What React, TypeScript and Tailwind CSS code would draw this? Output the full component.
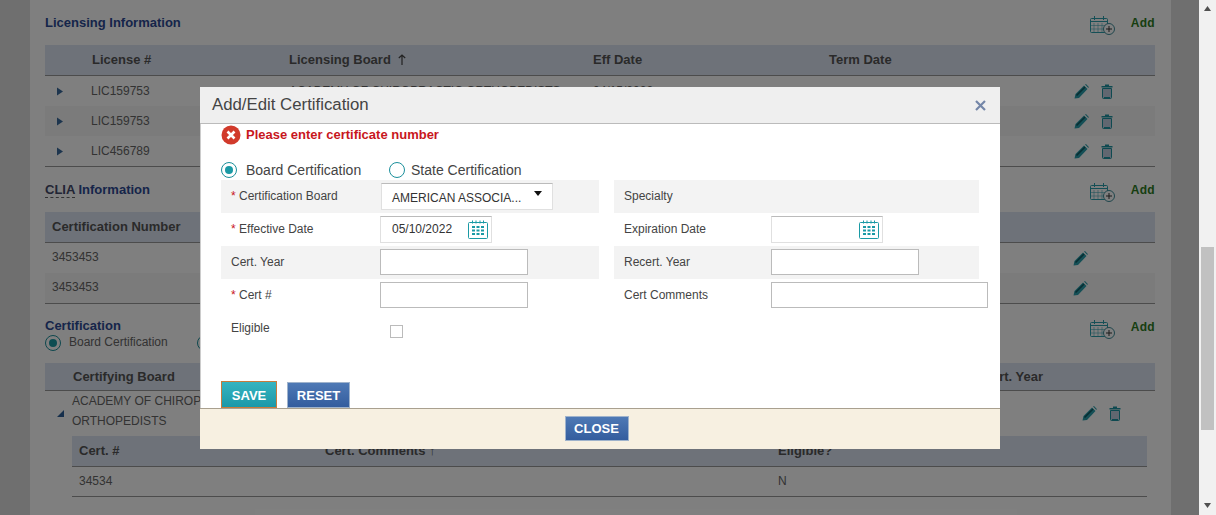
const FONT = "font-['Liberation_Sans',Arial,sans-serif]";

function CalendarPlus() {
  return (
    <svg width="25" height="19" viewBox="0 0 25 19" fill="none" stroke="#2a9fac" strokeWidth="1">
      <rect x="0.5" y="2.5" width="17" height="14" rx="1" />
      <path d="M0.5 5.5h17" />
      <path d="M4 7v9M8 7v9M12 7v9M1 9.5h16M1 13h16" strokeWidth="0.5" />
      <path d="M4.5 0v4M13.5 0v4" />
      <circle cx="19" cy="13" r="5.5" fill="#fff" stroke="#3f8d99" />
      <path d="M19 10v6M16 13h6" stroke="#333" />
    </svg>
  );
}

function Pencil() {
  return (
    <svg width="15" height="15" viewBox="0 0 15 15">
      <path d="M0.5 14.5l1-4.5 8.5-8.5 3.5 3.5L5 14z" fill="#2a9fac" />
      <path d="M11 0.6l1-0.5 2.8 2.8-0.5 1z" fill="#2a9fac" />
      <path d="M2.5 11.5l8.5-8.5" stroke="#0f5a63" strokeWidth="1.6" />
    </svg>
  );
}

function Trash() {
  return (
    <svg width="12" height="15" viewBox="0 0 12 15">
      <path d="M4 0.5h4v1.5h3.5v1.5H0.5V2H4z" fill="#1f95a3" />
      <path d="M1.5 4.5h9V13.5a1 1 0 0 1-1 1h-7a1 1 0 0 1-1-1z" fill="#c3cfe0" stroke="#1f95a3" />
      <path d="M3 13.5h6" stroke="#1f95a3" />
    </svg>
  );
}

function RowActions({ trash = true }: { trash?: boolean }) {
  return (
    <div className="flex items-center gap-[12px]">
      <Pencil />
      {trash && <Trash />}
    </div>
  );
}

function Caret({ open = false }: { open?: boolean }) {
  if (open) {
    return (
      <svg width="7" height="7" viewBox="0 0 7 7">
        <path d="M7 0v7H0z" fill="#2c5f98" />
      </svg>
    );
  }
  return (
    <svg width="6" height="9" viewBox="0 0 6 9">
      <path d="M0 0.5l6 4-6 4z" fill="#3a6a9c" />
    </svg>
  );
}

function SectionAdd() {
  return (
    <div className="flex items-start gap-[16px]">
      <div className="mt-[16px]">
        <CalendarPlus />
      </div>
      <span className="mt-[14px] text-[12px] leading-[18px] font-bold tracking-[0.3px] text-[#2e7d1f]">Add</span>
    </div>
  );
}

function Radio({ on = false }: { on?: boolean }) {
  return (
    <span className="flex h-[16px] w-[16px] shrink-0 items-center justify-center rounded-full border border-[#1a8f9b] bg-white">
      {on && <span className="h-[8px] w-[8px] rounded-full bg-[#1a9aa5]" />}
    </span>
  );
}

function Page() {
  const licenses = [
    ["LIC159753", "ACADEMY OF CHIROPRACTIC ORTHOPEDISTS", "04/15/2022"],
    ["LIC159753", "", ""],
    ["LIC456789", "", ""],
  ];
  return (
    <div className="ml-[30px] mr-[28px] h-full bg-white pl-[15px] pr-[16px] text-[12px] text-[#666]">
      <div className="flex h-[45px] items-start justify-between">
        <span className="mt-[15px] text-[13px] leading-[15px] font-bold text-[#2c4a94]">Licensing Information</span>
        <SectionAdd />
      </div>
      <div className="grid h-[31px] grid-cols-[47px_197px_304px_236px_1fr] items-center border-b border-[#999] bg-[#dce4f2] pb-[1px] text-[13px] font-bold text-[#555]">
        <span />
        <span>License #</span>
        <span className="flex items-center gap-[7px]">
          Licensing Board
          <svg width="8" height="11" viewBox="0 0 8 11" fill="none" stroke="#444" strokeWidth="1.2">
            <path d="M4 11V1M0.8 4L4 1l3.2 3" />
          </svg>
        </span>
        <span>Eff Date</span>
        <span>Term Date</span>
      </div>
      <div className="border-b border-[#999]">
        {licenses.map((row, i) => (
          <div
            key={i}
            className={`grid h-[30px] grid-cols-[12px_22px_198px_304px_1fr_81px] items-center pl-[12px] ${i === 1 ? "bg-[#f7f7f7]" : ""}`}
          >
            <Caret />
            <span />
            <span>{row[0]}</span>
            <span>{row[1]}</span>
            <span>{row[2]}</span>
            <RowActions />
          </div>
        ))}
      </div>

      <div className="flex h-[45px] items-start justify-between">
        <span className="mt-[15px] text-[13px] leading-[15px] font-bold text-[#2c4a94]">
          <span className="border-b border-dashed border-[#666] text-[#444a6a]">CLIA</span> Information
        </span>
        <SectionAdd />
      </div>
      <div className="flex h-[31px] items-center border-b border-[#999] bg-[#dce4f2] pb-[1px] pl-[7px] text-[13px] font-bold text-[#555]">
        Certification Number
      </div>
      <div className="border-b border-[#999]">
        {["3453453", "3453453"].map((n, i) => (
          <div
            key={i}
            className={`flex h-[30px] items-center justify-between pl-[7px] pr-[67px] ${i === 1 ? "bg-[#f7f7f7]" : ""}`}
          >
            <span className="pb-[2px]">{n}</span>
            <RowActions trash={false} />
          </div>
        ))}
      </div>

      <div className="flex h-[59px] items-start justify-between">
        <div className="pt-[15px]">
          <div className="text-[13px] leading-[14px] font-bold text-[#2c4a94]">Certification</div>
          <div className="flex items-center gap-[8px]">
            <Radio on />
            <span className="pb-[2px]">Board Certification</span>
            <span className="ml-[21px]">
              <Radio />
            </span>
          </div>
        </div>
        <SectionAdd />
      </div>
      <div className="flex h-[28px] items-center justify-between border-b border-[#999] bg-[#dce4f2] pl-[28px] pr-[112px] text-[13px] font-bold text-[#555]">
        <span>Certifying Board</span>
        <span>Recert. Year</span>
      </div>
      <div className="flex h-[45px] items-center pl-[12px] pr-[34px]">
        <Caret open />
        <span className="mb-[6px] ml-[8px] w-[200px] leading-[20px]">ACADEMY OF CHIROPRACTIC ORTHOPEDISTS</span>
        <span className="ml-auto">
          <RowActions />
        </span>
      </div>
      <div className="ml-[27px] mr-[8px]">
        <div className="grid h-[31px] grid-cols-[246px_453px_1fr] items-center border-b border-[#999] bg-[#dce4f2] pl-[7px] text-[13px] font-bold text-[#555]">
          <span>Cert. #</span>
          <span>Cert. Comments ↑</span>
          <span>Eligible?</span>
        </div>
        <div className="grid h-[30px] grid-cols-[246px_453px_1fr] items-center border-b border-[#999] pb-[2px] pl-[7px]">
          <span>34534</span>
          <span />
          <span>N</span>
        </div>
      </div>
    </div>
  );
}

function Cal() {
  return (
    <svg width="20" height="20" viewBox="0 0 20 20" fill="none" stroke="#1a9aa5">
      <rect x="0.5" y="2.5" width="19" height="16" rx="1" />
      <path d="M4.5 0.5v3M8 0.5v3M12 0.5v3M15.5 0.5v3" />
      <path d="M4 7h3M8.5 7h3M13 7h3M4 10.5h3M8.5 10.5h3M13 10.5h3M4 14h3M8.5 14h3M13 14h3" strokeWidth="2" />
    </svg>
  );
}

function Label({ req, wide, children }: { req?: boolean; wide?: boolean; children: string }) {
  return (
    <span className={`${wide ? "w-[159px]" : "w-[157px]"} shrink-0 pb-[2px] pl-[10px] text-[12px] text-[#444]`}>
      {req && <span className="text-[#c8161d]">* </span>}
      {children}
    </span>
  );
}

function DateBox({ value = "" }: { value?: string }) {
  return (
    <div className="flex h-[27px] w-[112px] items-center justify-between border border-[#e0e0e0] border-t-[#bbb] bg-white pl-[11px] pr-[3px] text-[12px] text-[#333]">
      <span className="pb-[2px]">{value}</span>
      <Cal />
    </div>
  );
}

function TextBox({ w }: { w: string }) {
  return <div className={`mb-[2px] h-[26px] shrink-0 ${w} border border-[#bbb] bg-white`} />;
}

function FormRow({ shade, children }: { shade?: boolean; children: React.ReactNode }) {
  return <div className={`flex h-[33px] items-center ${shade ? "bg-[#f3f3f3]" : ""}`}>{children}</div>;
}

function Modal() {
  const btn = "border border-[#9fb3cc] bg-gradient-to-b from-[#4e79b5] to-[#345d9e] pt-[1px]";
  return (
    <div className="absolute left-[200px] top-[87px] flex h-[362px] w-[800px] flex-col bg-white">
      <div className="flex h-[37px] shrink-0 items-center justify-between border-b border-[#bbb] bg-[#efefef] pl-[12px] pr-[14px]">
        <span className="text-[16.8px] text-[#444]">Add/Edit Certification</span>
        <svg width="11" height="11" viewBox="0 0 11 11" stroke="#7486a8" strokeWidth="2.2">
          <path d="M1 1l9 9M10 1l-9 9" />
        </svg>
      </div>
      <div className="flex h-[284px] shrink-0 flex-col border-l border-[#ccc] pl-[20px]">
        <div className="flex h-[21px] items-center gap-[5px]">
          <svg width="20" height="20" viewBox="0 0 20 20">
            <circle cx="10" cy="10" r="9.5" fill="#d13a2b" />
            <path d="M6.5 6.5l7 7M13.5 6.5l-7 7" stroke="#fff" strokeWidth="2.6" />
          </svg>
          <span className="text-[13px] font-bold text-[#c8161d]">Please enter certificate number</span>
        </div>
        <div className="mt-[15px] flex h-[20px] items-center text-[14px] text-[#444]">
          <Radio on />
          <span className="ml-[9px] w-[143px]">Board Certification</span>
          <Radio />
          <span className="ml-[6px]">State Certification</span>
        </div>
        <div className="grid grid-cols-[378px_365px] gap-x-[15px]">
          <div>
            <FormRow shade>
              <Label req wide>Certification Board</Label>
              <div className="ml-[1px] flex h-[27px] w-[172px] justify-between border border-[#e0e0e0] border-t-[#bbb] bg-white pl-[10px] pr-[10px] pt-[6px] text-[12px] leading-[16px] text-[#333]">
                <span>AMERICAN ASSOCIA...</span>
                <svg className="mt-[1px]" width="8" height="5" viewBox="0 0 8 5">
                  <path d="M0 0h8L4 5z" fill="#111" />
                </svg>
              </div>
            </FormRow>
            <FormRow>
              <Label req wide>Effective Date</Label>
              <DateBox value="05/10/2022" />
            </FormRow>
            <FormRow shade>
              <Label wide>Cert. Year</Label>
              <TextBox w="w-[148px]" />
            </FormRow>
            <FormRow>
              <Label req wide>Cert #</Label>
              <TextBox w="w-[148px]" />
            </FormRow>
            <FormRow>
              <Label wide>Eligible</Label>
              <span className="ml-[10px] mt-[6px] h-[13px] w-[13px] border border-[#bbb]" />
            </FormRow>
          </div>
          <div>
            <FormRow shade>
              <Label>Specialty</Label>
            </FormRow>
            <FormRow>
              <Label>Expiration Date</Label>
              <DateBox />
            </FormRow>
            <FormRow shade>
              <Label>Recert. Year</Label>
              <TextBox w="w-[148px]" />
            </FormRow>
            <FormRow>
              <Label>Cert Comments</Label>
              <TextBox w="w-[217px]" />
            </FormRow>
          </div>
        </div>
        <div className="mt-auto flex items-end gap-[10px] text-[13px] font-bold text-white">
          <button className="h-[27px] w-[56px] border border-[#c77b3c] bg-gradient-to-b from-[#35b4c0] to-[#1a98a8] pt-[2px]">
            SAVE
          </button>
          <button className={`h-[26px] w-[63px] ${btn}`}>RESET</button>
        </div>
      </div>
      <div className="flex flex-1 items-center justify-center border-t border-[#a9a08f] bg-[#f7f0e1] pb-[2px] pr-[7px]">
        <button className={`h-[25px] w-[64px] ${btn} text-[13px] font-bold text-white`}>CLOSE</button>
      </div>
    </div>
  );
}

function Scrollbar() {
  return (
    <div className="flex h-full w-[17px] shrink-0 flex-col items-center bg-[#f1f1f1]">
      <svg className="mt-[6px]" width="7" height="5" viewBox="0 0 7 5">
        <path d="M3.5 0L7 5H0z" fill="#505050" />
      </svg>
      <div className="mt-[236px] h-[183px] w-[13px] bg-[#c1c1c1]" />
      <svg className="mb-[7px] mt-auto" width="7" height="5" viewBox="0 0 7 5">
        <path d="M0 0h7L3.5 5z" fill="#505050" />
      </svg>
    </div>
  );
}

export default function App() {
  return (
    <div className={`relative flex h-[515px] w-[1216px] overflow-hidden ${FONT}`}>
      <div className="h-full w-[1199px] shrink-0 bg-[#dedede]">
        <Page />
      </div>
      <Scrollbar />
      <div className="absolute inset-y-0 left-0 w-[1199px] bg-black/50" />
      <Modal />
    </div>
  );
}
